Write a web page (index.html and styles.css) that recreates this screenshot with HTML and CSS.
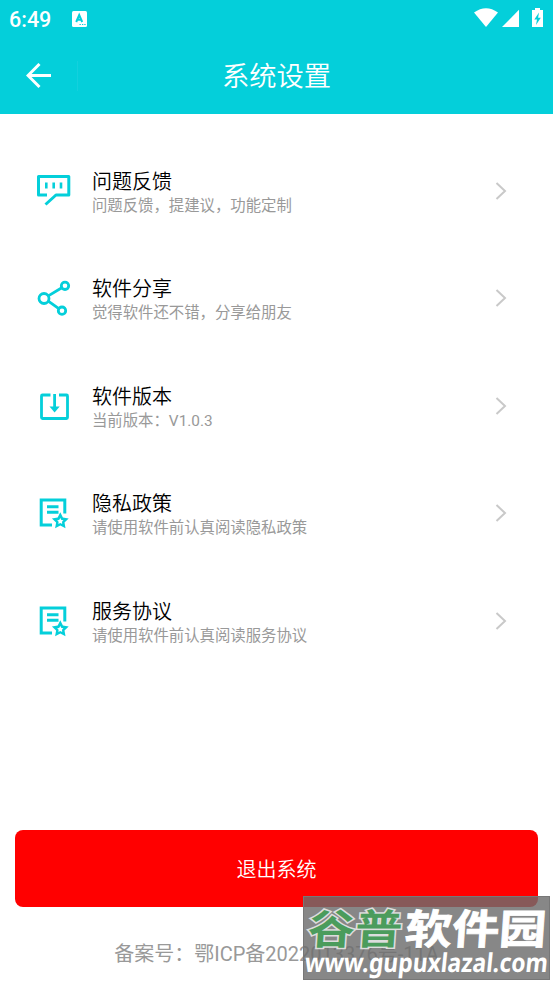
FILE: index.html
```html
<!DOCTYPE html>
<html lang="zh-CN">
<head>
<meta charset="utf-8">
<title>系统设置</title>
<link rel="stylesheet" href="styles.css">
</head>
<body>
<header class="top">
  <div class="status">
    <span class="clock">6:49</span>
    <svg class="app-badge" width="15" height="16" viewBox="0 0 15 16"><rect width="15" height="16" rx="1.5" fill="#fff"/><path d="M4.200 11 7.200 4l3 7M5.300 8.800h3.800" fill="none" stroke="#04cfda" stroke-width="2"/><path d="M7.500 13.500h1.300M10 13.500h1.300M12.300 13.500h1.300" stroke="#04cfda" stroke-width="1.200"/></svg>
    <svg class="signals" width="72" height="22" viewBox="0 0 72 22"><path d="M0 5.500Q12-3 24 5.500L12 20Z" fill="#fff"/><path d="M28 20 45 2.800V20Z" fill="#fff"/><path d="M58 3h3V1h5v2h3v17H58Z" fill="#fff"/><path d="M65 5.500 60.300 12.500h2.700L62 18l4.800-7.300h-2.700Z" fill="#04cfda"/></svg>
  </div>
  <div class="bar">
    <svg class="back" width="26" height="26" viewBox="0 0 26 26"><path d="M25 12.500H2M13.500 1 2 12.500 13.500 24" fill="none" stroke="#fff" stroke-width="3"/></svg>
    <i class="divider"></i>
    <h1>系统设置</h1>
  </div>
</header>
<main>
  <ul class="list">
    <li class="row">
      <svg class="icon" viewBox="0 0 36 36"><path d="M11 22H2.500V3.500h30.300V22H20L9.500 31.500" fill="none" stroke="#04cfda" stroke-width="3" stroke-linejoin="round"/><path d="M10.300 9.500v6M17.700 9.500v6M25 9.500v6" stroke="#04cfda" stroke-width="2.600"/></svg>
      <div class="copy"><h2>问题反馈</h2><p>问题反馈，提建议，功能定制</p></div>
      <svg class="chevron" viewBox="0 0 12 18"><path d="m1.500 1 8.500 8-8.500 8"/></svg>
    </li>
    <li class="row">
      <svg class="icon" viewBox="0 0 36 36"><g fill="none" stroke="#04cfda" stroke-width="2.800"><circle cx="8" cy="18.500" r="5"/><circle cx="29" cy="5.800" r="3.700"/><circle cx="26" cy="30.700" r="3.700"/><path d="M12.300 15.900 25.800 7.700M12.300 21.200l10.500 7.500"/></g></svg>
      <div class="copy"><h2>软件分享</h2><p>觉得软件还不错，分享给朋友</p></div>
      <svg class="chevron" viewBox="0 0 12 18"><path d="m1.500 1 8.500 8-8.500 8"/></svg>
    </li>
    <li class="row">
      <svg class="icon" viewBox="0 0 36 36"><path d="M14.500 7H6.500Q5.500 7 5.500 8v21.500q0 1 1 1h24q1 0 1-1V8q0-1-1-1H23" fill="none" stroke="#04cfda" stroke-width="2.800"/><path d="M18.600 6v14" stroke="#04cfda" stroke-width="2.800"/><path d="M13.500 18.500h10.200l-5.100 6Z" fill="#04cfda"/></svg>
      <div class="copy"><h2>软件版本</h2><p>当前版本：V1.0.3</p></div>
      <svg class="chevron" viewBox="0 0 12 18"><path d="m1.500 1 8.500 8-8.500 8"/></svg>
    </li>
    <li class="row">
      <svg class="icon" viewBox="0 0 36 36"><path d="M16 30H5.200V5h23.600v13.500M11 11.800h11.500M11 17.300h11.500" fill="none" stroke="#04cfda" stroke-width="3"/><path d="m24.300 17.300 2.600 5.300 5.800.8-4.200 4.100 1 5.800-5.200-2.700-5.200 2.700 1-5.800-4.200-4.100 5.800-.8Z" fill="#04cfda"/><path d="m24.300 23 1.100 1.900 2 .4-1.400 1.500.2 2.100-1.900-.9-1.900.9.200-2.100-1.400-1.500 2-.4Z" fill="#fff"/></svg>
      <div class="copy"><h2>隐私政策</h2><p>请使用软件前认真阅读隐私政策</p></div>
      <svg class="chevron" viewBox="0 0 12 18"><path d="m1.500 1 8.500 8-8.500 8"/></svg>
    </li>
    <li class="row">
      <svg class="icon" viewBox="0 0 36 36"><path d="M16 30H5.200V5h23.600v13.500M11 11.800h11.500M11 17.300h11.500" fill="none" stroke="#04cfda" stroke-width="3"/><path d="m24.300 17.300 2.600 5.300 5.800.8-4.200 4.100 1 5.800-5.200-2.700-5.200 2.700 1-5.800-4.200-4.100 5.800-.8Z" fill="#04cfda"/><path d="m24.300 23 1.100 1.900 2 .4-1.400 1.500.2 2.100-1.900-.9-1.900.9.200-2.100-1.400-1.500 2-.4Z" fill="#fff"/></svg>
      <div class="copy"><h2>服务协议</h2><p>请使用软件前认真阅读服务协议</p></div>
      <svg class="chevron" viewBox="0 0 12 18"><path d="m1.500 1 8.500 8-8.500 8"/></svg>
    </li>
  </ul>
  <button class="logout">退出系统</button>
</main>
<footer class="record">备案号：鄂ICP备2022013376号-11A</footer>
<aside class="watermark">
  <svg width="247" height="84" viewBox="0 0 247 84">
    <g class="brand">
      <text class="green" transform="translate(4 48) skewX(-4) scale(1.150 1)" x="0" y="0">谷普</text>
      <text class="white" transform="translate(101 48) skewX(-4) scale(1.150 1)" x="0" y="0">软件园</text>
    </g>
    <text class="site" transform="translate(1 76) skewX(-6)" x="0" y="0" textLength="243" lengthAdjust="spacingAndGlyphs">www.gupuxlazal.com</text>
  </svg>
</aside>
</body>
</html>
```
FILE: styles.css
```css
* { box-sizing: border-box; }
body {
  margin: 0;
  height: 984px;
  position: relative;
  overflow: hidden;
  background: #fff;
  color: #000;
  font-family: Roboto, "Noto Sans CJK SC", sans-serif;
}
h1, h2, p, ul { margin: 0; padding: 0; font-weight: 400; }
h1, h2 { font-weight: 350; }
.top { height: 114px; background: #04cfda; color: #fff; }
.status { height: 38px; padding: 0 9px; display: flex; align-items: center; }
.clock { width: 63px; font-size: 21.500px; line-height: 38px; font-weight: 500; padding-top: 1px; }
.app-badge { margin-top: -1px; }
.signals { margin-left: auto; margin-right: -2px; margin-top: -2px; }
.bar { height: 76px; display: grid; grid-template-columns: 26px 26px 1fr 78px; align-items: center; padding-left: 26px; }
.divider { justify-self: end; width: 1px; height: 30px; background: #14d0dd; }
.bar h1 { text-align: center; font-size: 27.300px; line-height: 40px; padding-top: 2px; }
.list { list-style: none; padding-top: 22.700px; }
.row { height: 107.670px; display: flex; align-items: center; padding: 0 46.500px 0 36px; }
.icon { width: 36px; height: 36px; flex: none; }
.copy { flex: 1; padding-left: 20px; padding-top: 5px; }
.copy h2 { font-size: 20px; line-height: 25px; }
.copy p { font-size: 15.380px; line-height: 22px; color: #999; }
.chevron { width: 12px; height: 18px; fill: none; stroke: #c9c9c9; stroke-width: 2; }
.logout {
  display: block;
  width: 523px;
  height: 77px;
  margin: 155px 15px 0;
  padding: 3px 0 0;
  border: 0;
  border-radius: 8px;
  background: #f00;
  color: #fff;
  font: 350 20px/30px Roboto, "Noto Sans CJK SC", sans-serif;
}
.record { margin-top: 32px; text-align: center; font-size: 20px; line-height: 31px; color: #999; }
.watermark {
  position: absolute;
  left: 303px;
  top: 896px;
  width: 247px;
  height: 84px;
  background: rgba(108, 108, 108, .82);
  border: 1px solid #777;
}
.watermark svg { display: block; margin: -1px; }
.brand { font: 700 41px "Noto Sans CJK SC", sans-serif; }
.green { fill: #4b9c5c; stroke: #ddd; stroke-width: 3px; paint-order: stroke; }
.white { fill: #fff; stroke: #fff; stroke-width: .8px; }
.site { font: 700 26px "Noto Sans", sans-serif; fill: #fff; }
```
